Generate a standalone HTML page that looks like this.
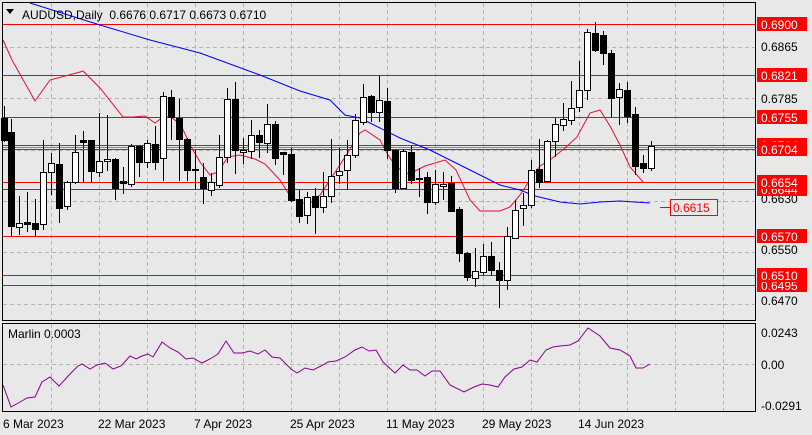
<!DOCTYPE html>
<html><head><meta charset="utf-8"><style>
html,body{margin:0;padding:0;background:#e8e8e8;}
body{width:812px;height:435px;overflow:hidden;position:relative;font-family:"Liberation Sans",sans-serif;}
svg{position:absolute;left:0;top:0;}
svg text{font-family:"Liberation Sans",sans-serif;font-size:12px;}
</style></head><body>
<svg id="s" width="812" height="435" viewBox="0 0 812 435" xmlns="http://www.w3.org/2000/svg">
<rect x="0" y="0" width="812" height="435" fill="#e8e8e8"/>
<g id="grid" stroke="#b4b4b4" stroke-dasharray="4,3" stroke-width="1"></g>
<g id="hl"></g>
<polyline id="blue" fill="none" stroke="#0000ff" stroke-width="1"/>
<polyline id="red" fill="none" stroke="#e0103a" stroke-width="1"/>
<g id="candles"></g>
<polyline id="marlin" fill="none" stroke="#8b008b" stroke-width="1"/>
<!-- frames -->
<rect x="2.5" y="2.5" width="753" height="318" fill="none" stroke="#000"/>
<rect x="2.5" y="323.5" width="753" height="88" fill="none" stroke="#000"/>
<line x1="660" y1="207.5" x2="670" y2="207.5" stroke="#f00"/>
<rect x="670.5" y="199.5" width="47" height="16" fill="#e8e8e8" stroke="#f00"/>
<text x="673" y="212" fill="#f00">0.6615</text>
<path d="M6 9 L14 9 L10 14 Z" fill="#000"/>
<text x="22" y="19" fill="#000">AUDUSD,Daily&#160;&#160;0.6676 0.6717 0.6673 0.6710</text>
<text x="8" y="338" fill="#000">Marlin 0.0003</text>
<g id="axis" fill="#000"></g>
<g id="dates" fill="#000">
<text x="3" y="428">6 Mar 2023</text>
<text x="98" y="428">22 Mar 2023</text>
<text x="194" y="428">7 Apr 2023</text>
<text x="290" y="428">25 Apr 2023</text>
<text x="386" y="428">11 May 2023</text>
<text x="482" y="428">29 May 2023</text>
<text x="578" y="428">14 Jun 2023</text>
</g>
<text x="761" y="51" fill="#000">0.6865</text>
<text x="761" y="103" fill="#000">0.6785</text>
<text x="761" y="203" fill="#000">0.6630</text>
<text x="761" y="254" fill="#000">0.6550</text>
<text x="761" y="305" fill="#000">0.6470</text>
<text x="761" y="337" fill="#000">0.0243</text>
<text x="761" y="369" fill="#000">0.00</text>
<text x="761" y="410" fill="#000">-0.0291</text>
<g id="labels"></g>
</svg>
<script>
var NS="http://www.w3.org/2000/svg";
function el(p,t,a,txt){var e=document.createElementNS(NS,t);for(var k in a)e.setAttribute(k,a[k]);if(txt)e.textContent=txt;document.getElementById(p).appendChild(e);return e;}
// grid
for(var x=51;x<755;x+=48){el("grid","line",{x1:x+.5,y1:3,x2:x+.5,y2:320});el("grid","line",{x1:x+.5,y1:324,x2:x+.5,y2:411});}
[46.5,98,149.5,201,252,304].forEach(function(y){el("grid","line",{x1:3,y1:Math.round(y)+.5,x2:755,y2:Math.round(y)+.5});});
el("grid","line",{x1:3,y1:364.5,x2:755,y2:364.5});
// horizontal levels
var lv=[[24,"0.6900"],[75,"0.6821"],[117,"0.6755"],[145,"0.6714"],[149,"0.6704"],[182,"0.6654"],[189,"0.6644"],[236,"0.6570"],[275,"0.6510"],[285,"0.6495"]];
lv.forEach(function(l){el("hl","line",{x1:3,y1:l[0]+.5,x2:755,y2:l[0]+.5,stroke:"#f00","stroke-width":1});});
el("hl","line",{x1:3,y1:147.5,x2:760,y2:147.5,stroke:"#888"});
// right labels (draw hidden ones first)
[[189,"0.6644"],[145,"0.6714"],[285,"0.6495"],[275,"0.6510"],[236,"0.6570"],[182,"0.6654"],[149,"0.6704"],[117,"0.6755"],[75,"0.6821"],[24,"0.6900"]].forEach(function(l){
 el("labels","rect",{x:757,y:l[0]-7,width:50,height:14,fill:"#f00"});
 el("labels","text",{x:761,y:l[0]+5,fill:"#fff"},l[1]);
});
// MAs
document.getElementById("red").setAttribute("points","3,40 12,60 35,101 50,80 80,72 83,71 100,88 123,117 133,117 145,116 155,123 163,117 171,117 181,125 190,145 200,162 210,175 218,172 228,157 240,155 255,159 265,164 280,180 290,196 300,203 310,203 320,195 330,180 345,157 360,133 365,130 380,140 388,155 395,165 405,174 413,172 425,166 445,160 456,170 470,200 480,211 500,211 510,207 520,195 530,180 540,166 550,160 565,148 577,137 590,113 600,110 610,126 620,145 630,167 643,182");
document.getElementById("blue").setAttribute("points","30,3 100,25 150,40 200,53 260,75 300,91 330,100 345,115 360,118 380,128 400,138 430,150 450,160 480,175 500,185 520,190 535,196 560,202 580,204 600,202 620,201 650,203");
document.getElementById("marlin").setAttribute("points","3,385 11,407 20,402 27,398 35,397 42,382 50,377 59,386 70,374 78,366 82,364 90,369 97,365 105,363 113,369 121,366 130,356 136,359 142,356 148,354 153,357 162,342 170,348 178,352 186,359 193,358 202,363 210,359 218,354 226,341 234,353 242,353 250,351 258,354 265,350 272,357 280,358 291,369 297,373 305,368 313,370 321,366 328,362 336,361 345,357 355,350 362,347 369,351 376,350 383,362 395,373 403,365 410,370 417,370 425,376 432,371 440,371 450,385 464,392 474,387 482,384 490,385 498,387 505,377 514,369 522,367 530,360 537,362 546,350 553,347 560,346 570,345 578,341 588,328 600,336 610,348 620,350 630,356 636,368 643,368 650,364");
// candles x,h,top,bot,low,bull
var C=[[4,106,118,140,142,0],[11,119,132,226,236,0],[19,196,223,227,235,1],[27,192,222,224,232,0],[35,199,223,229,237,0],[43,140,172,224,230,1],[51,153,163,172,195,1],[59,143,164,208,223,0],[67,181,182,206,210,1],[75,135,152,182,184,1],[83,131,140,142,182,0],[91,140,140,171,183,0],[99,113,161,172,177,1],[107,115,159,161,171,1],[115,158,159,188,200,0],[123,167,181,183,194,0],[131,144,146,184,187,1],[139,145,146,162,177,0],[147,140,143,162,168,1],[155,126,144,162,170,0],[163,92,96,158,181,1],[171,90,97,117,140,0],[179,99,118,139,181,0],[187,138,139,170,181,0],[195,150,169,170,189,0],[203,163,177,188,204,0],[211,173,182,190,196,1],[219,135,157,185,188,1],[227,88,99,157,163,1],[235,82,99,150,174,0],[243,138,150,152,164,1],[251,120,135,151,159,1],[259,130,135,142,158,0],[267,104,124,143,153,1],[275,121,124,158,165,0],[283,152,152,154,175,0],[291,148,154,200,202,0],[299,190,199,216,223,0],[307,192,197,215,224,1],[315,188,196,207,234,0],[323,172,196,207,213,1],[331,139,176,196,203,1],[339,148,171,175,184,1],[347,140,155,170,190,1],[355,114,120,155,158,1],[363,84,97,122,125,1],[371,95,96,112,122,0],[379,75,100,112,122,1],[387,88,101,150,159,0],[395,149,150,188,193,0],[403,149,151,188,189,1],[411,146,152,180,184,0],[419,168,178,179,197,0],[427,172,177,202,214,0],[435,170,184,202,205,1],[443,172,184,186,200,1],[451,176,183,211,212,0],[459,207,209,253,262,0],[467,252,253,277,281,0],[475,248,271,278,287,1],[483,244,256,272,275,1],[491,242,256,270,276,0],[499,262,270,280,308,0],[507,227,236,280,290,1],[515,200,210,238,239,1],[523,193,205,208,226,1],[531,160,170,205,208,1],[539,139,169,182,188,0],[547,140,141,181,183,1],[555,118,124,141,157,1],[563,103,119,125,131,1],[571,81,108,120,125,1],[579,61,90,107,112,1],[587,29,32,90,100,1],[595,22,33,50,52,0],[603,31,35,53,65,0],[611,50,53,98,117,0],[619,83,89,97,125,1],[627,82,90,116,123,0],[635,107,114,166,175,0],[643,155,163,168,173,0],[651,141,146,168,171,1]];
C.forEach(function(c){
 el("candles","line",{x1:c[0]+.5,y1:c[1],x2:c[0]+.5,y2:c[4],stroke:"#000"});
 var h=Math.max(1,c[3]-c[2]);
 el("candles","rect",{x:c[0]-2.5,y:c[2]+.5,width:6,height:h,fill:c[5]?"#fff":"#000",stroke:"#000"});
});
</script>
</body></html>
